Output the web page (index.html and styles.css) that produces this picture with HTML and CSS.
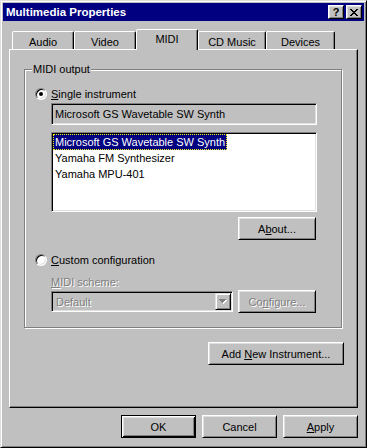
FILE: index.html
```html
<!DOCTYPE html>
<html lang="en">

<head>
    <meta charset="UTF-8">
    <title>Multimedia Properties</title>
    <link rel="stylesheet" href="styles.css">
</head>

<body>
    <div class="window">
        <!-- title bar -->
        <div class="titlebar">
            <span class="title">Multimedia Properties</span>
            <div class="caption">
                <span class="cap-btn help">?</span>
                <span class="cap-btn close">
                    <svg width="8" height="7" viewBox="0 0 8 7" shape-rendering="crispEdges">
                        <path d="M0 0h2v1h-2zM6 0h2v1h-2zM1 1h2v1h-2zM5 1h2v1h-2zM2 2h4v1h-4zM3 3h2v1h-2zM2 4h4v1h-4zM1 5h2v1h-2zM5 5h2v1h-2zM0 6h2v1h-2zM6 6h2v1h-2z" fill="#000" />
                    </svg>
                </span>
            </div>
        </div>

        <div class="content">
            <!-- tabs -->
            <div class="tabs">
                <div class="tab t-audio">Audio</div>
                <div class="tab t-video">Video</div>
                <div class="tab t-midi active">MIDI</div>
                <div class="tab t-cd">CD Music</div>
                <div class="tab t-dev">Devices</div>
            </div>

            <div class="panel">
                <div class="group">
                    <span class="group-label">MIDI output</span>

                    <div class="radio-row">
                        <span class="radio checked"></span>
                        <span><u>S</u>ingle instrument</span>
                    </div>
                    <div class="field indent">Microsoft GS Wavetable SW Synth</div>
                    <div class="listbox indent">
                        <div class="item selected">Microsoft GS Wavetable SW Synth</div>
                        <div class="item">Yamaha FM Synthesizer</div>
                        <div class="item">Yamaha MPU-401</div>
                    </div>
                    <div class="about-row">
                        <button class="btn about">A<u>b</u>out...</button>
                    </div>

                    <div class="radio-row custom">
                        <span class="radio"></span>
                        <span><u>C</u>ustom configuration</span>
                    </div>
                    <div class="sub-label indent disabled"><u>M</u>IDI scheme:</div>
                    <div class="combo-row indent">
                        <div class="combo">
                            <span class="combo-text disabled">Default</span>
                            <span class="combo-arrow">
                                <svg width="8" height="5" viewBox="0 0 8 5" shape-rendering="crispEdges">
                                    <path d="M1 1h7v1h-7zM2 2h5v1h-5zM3 3h3v1h-3zM4 4h1v1h-1z" fill="#fff" />
                                    <path d="M0 0h7v1h-7zM1 1h5v1h-5zM2 2h3v1h-3zM3 3h1v1h-1z" fill="#808080" />
                                </svg>
                            </span>
                        </div>
                        <button class="btn configure disabled">Co<u>n</u>figure...</button>
                    </div>
                </div>

                <div class="add-row">
                    <button class="btn add">Add <u>N</u>ew Instrument...</button>
                </div>
            </div>

            <!-- dialog buttons -->
            <div class="footer">
                <button class="btn default">OK</button>
                <button class="btn">Cancel</button>
                <button class="btn"><u>A</u>pply</button>
            </div>
        </div>
    </div>
</body>

</html>
```

FILE: styles.css
```css
* {
    margin: 0;
    padding: 0;
    box-sizing: border-box;
}

body {
    width: 367px;
    height: 448px;
    font-family: "Liberation Sans", Arial, sans-serif;
    font-size: 11px;
    color: #000;
    background: #c0c0c0;
}

u {
    text-decoration: underline;
    text-underline-offset: 1px;
}

.window {
    width: 367px;
    height: 448px;
    background: #c0c0c0;
    border: 1px solid;
    border-color: #dfdfdf #000 #000 #dfdfdf;
    box-shadow: inset 1px 1px #fff, inset -1px -1px #808080;
    padding: 2px;
}

.titlebar {
    height: 18px;
    background: #000080;
    display: flex;
    align-items: center;
    justify-content: space-between;
    padding: 0 2px 0 3px;
}

.title {
    color: #fff;
    font-weight: bold;
    font-size: 11.5px;
}

.caption {
    display: flex;
    gap: 2px;
}

.cap-btn {
    width: 16px;
    height: 14px;
    display: flex;
    align-items: center;
    justify-content: center;
    background: #c0c0c0;
    border: 1px solid;
    border-color: #fff #000 #000 #fff;
    box-shadow: inset 1px 1px #dfdfdf, inset -1px -1px #808080;
    font-weight: bold;
    font-size: 11px;
    line-height: 12px;
}

.content {
    padding: 8px 6px 0;
}

/* tabs */
.tabs {
    display: flex;
    align-items: flex-end;
    height: 20px;
    padding-left: 3px;
}

.tab {
    height: 18px;
    border: 1px solid;
    border-bottom: none;
    border-color: #fff #000 transparent #fff;
    border-radius: 2px 2px 0 0;
    box-shadow: inset -1px 0 #808080;
    text-align: center;
    line-height: 16px;
    padding-top: 2px;
    background: #c0c0c0;
}

.t-audio,
.t-video,
.t-midi {
    width: 62px;
}

.t-cd {
    width: 68px;
}

.t-dev {
    width: 69px;
}

.tab.active {
    height: 21px;
    margin-bottom: -1px;
    padding-top: 1px;
    position: relative;
    z-index: 1;
}

.panel {
    height: 359px;
    border: 1px solid;
    border-color: #fff #000 #000 #fff;
    box-shadow: inset -1px -1px #808080;
    padding: 19px 14px 0;
}

/* group box */
.group {
    position: relative;
    width: 318px;
    height: 259px;
    border: 1px solid #808080;
    box-shadow: inset 1px 1px #fff, 1px 1px #fff;
    padding: 16px 0 0 10px;
}

.group-label {
    position: absolute;
    top: -7px;
    left: 7px;
    padding: 0 1px;
    line-height: 13px;
    background: #c0c0c0;
}

.radio-row {
    display: flex;
    align-items: center;
    gap: 4px;
    height: 16px;
}

.radio-row.custom {
    margin-top: 12px;
}

.radio {
    width: 12px;
    height: 12px;
    border-radius: 50%;
    border: 1px solid;
    border-color: #808080 #fff #fff #808080;
    box-shadow: inset 1px 1px #000, inset -1px -1px #dfdfdf;
    background: #fff;
    position: relative;
}

.radio.checked::after {
    content: "";
    position: absolute;
    left: 3px;
    top: 3px;
    width: 4px;
    height: 4px;
    border-radius: 50%;
    background: #000;
}

.indent {
    margin-left: 16px;
}

.field,
.listbox,
.combo {
    border: 1px solid;
    border-color: #808080 #fff #fff #808080;
    box-shadow: inset 1px 1px #000, inset -1px -1px #dfdfdf;
}

.field {
    width: 266px;
    height: 22px;
    margin-top: 1px;
    padding: 0 3px;
    line-height: 20px;
}

.listbox {
    width: 266px;
    height: 80px;
    margin-top: 7px;
    padding: 1px;
    background: #fff;
}

.item {
    width: fit-content;
    height: 16px;
    line-height: 16px;
    padding: 0 2px;
}

.item.selected {
    background: #000080;
    color: #fff;
    outline: 1px dotted #ffff00;
    outline-offset: -1px;
}

.about-row {
    margin-top: 5px;
    padding-left: 203px;
}

.btn {
    height: 23px;
    background: #c0c0c0;
    border: 1px solid;
    border-color: #fff #000 #000 #fff;
    box-shadow: inset 1px 1px #dfdfdf, inset -1px -1px #808080;
    font-family: inherit;
    font-size: 11px;
    color: #000;
    text-align: center;
    width: 75px;
}

.btn.default {
    border-color: #000;
    box-shadow: inset 1px 1px #fff, inset -1px -1px #000, inset 2px 2px #dfdfdf, inset -2px -2px #808080;
}

.about,
.configure {
    width: 78px;
}

.disabled {
    color: #808080;
    text-shadow: 1px 1px 0 #fff;
}

.sub-label {
    margin-top: 7px;
    line-height: 14px;
}

.combo-row {
    display: flex;
    gap: 5px;
    height: 23px;
    margin-top: 1px;
}

.combo {
    width: 182px;
    height: 21px;
    margin-top: 1px;
    padding: 1px;
    display: flex;
    align-items: center;
    justify-content: space-between;
    background: #c0c0c0;
}

.combo-text {
    padding-left: 3px;
}

.combo-arrow {
    width: 16px;
    height: 17px;
    display: flex;
    align-items: center;
    justify-content: center;
    border: 1px solid;
    border-color: #dfdfdf #000 #000 #dfdfdf;
    box-shadow: inset 1px 1px #fff, inset -1px -1px #808080;
}

.add-row {
    display: flex;
    justify-content: flex-end;
    margin-top: 14px;
    margin-right: -1px;
}

.btn.add {
    width: 136px;
}

.footer {
    display: flex;
    justify-content: flex-end;
    gap: 6px;
    margin-top: 7px;
}
```
